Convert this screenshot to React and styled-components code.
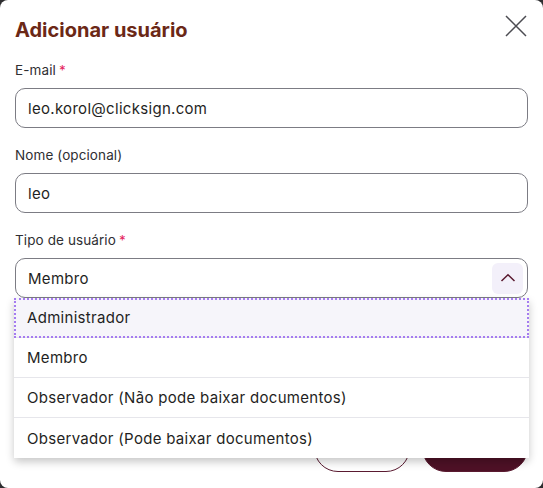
import styled, { createGlobalStyle } from "styled-components";

const GlobalStyle = createGlobalStyle`
  * { box-sizing: border-box; }
  html, body { margin: 0; height: 100%; }
  body {
    background: #2e2e30;
    font-family: "Inter", "Noto Sans", sans-serif;
  }
`;

const Dialog = styled.div`
  height: 100vh;
  background: #fff;
  border-radius: 8px;
  padding: 16px 15px 0 15px;
  display: flex;
  flex-direction: column;
`;

const Header = styled.div`
  display: flex;
  justify-content: space-between;
  align-items: flex-start;
  height: 28px;
  margin-bottom: 16px;
`;

const Title = styled.h2`
  margin: 0;
  font-size: 20px;
  line-height: 28px;
  font-weight: 700;
  color: #6b2816;
`;

const CloseButton = styled.button`
  border: none;
  background: none;
  padding: 0;
  margin: -2px 0 0 0;
  width: 24px;
  height: 24px;
  display: flex;
  align-items: center;
  justify-content: center;
  color: #4c4c52;
`;

const Field = styled.div`
  display: flex;
  flex-direction: column;
  gap: 8px;
  margin-bottom: 17px;
  position: relative;
`;

const Label = styled.label`
  font-size: 13.5px;
  line-height: 20px;
  color: #2f2f33;
  letter-spacing: 0.1px;
`;

const Required = styled.span`
  color: #e5265f;
  margin-left: 3px;
`;

const Input = styled.div`
  height: 40px;
  border: 1px solid #7c7c84;
  border-radius: 10px;
  padding: 0 12px;
  display: flex;
  align-items: center;
  justify-content: space-between;
  font-size: 15px;
  letter-spacing: 0.3px;
  color: #1f1f23;
`;

const ChevronButton = styled.span`
  width: 31px;
  height: 31px;
  margin-right: -8px;
  border-radius: 6px;
  background: #f3f0fa;
  display: flex;
  align-items: center;
  justify-content: center;
`;

const Menu = styled.ul`
  position: absolute;
  top: 100%;
  left: -1px;
  right: -1px;
  margin: 0;
  padding: 0;
  list-style: none;
  background: #fff;
  border-radius: 0 0 4px 4px;
  box-shadow: 0 4px 8px rgba(0, 0, 0, 0.22);
  z-index: 2;
`;

const Option = styled.li`
  height: 40px;
  display: flex;
  align-items: center;
  padding: 0 13px;
  font-size: 15px;
  letter-spacing: 0.3px;
  color: #1f1f23;
  background: ${(p) => (p.$active ? "#f6f5fa" : "#fff")};
  outline: ${(p) => (p.$active ? "2px dotted #a57cf0" : "none")};
  outline-offset: -2px;
  &:not(:last-child) {
    border-bottom: 1px solid #e6e6eb;
  }
`;

const Footer = styled.div`
  margin-top: auto;
  margin-bottom: 16px;
  display: flex;
  justify-content: flex-end;
  gap: 12px;
`;

const Button = styled.button`
  height: 48px;
  border-radius: 24px;
  padding: 0 24px;
  font-family: inherit;
  font-size: 14px;
  font-weight: 600;
  border: 1px solid #5a1a30;
  background: ${(p) => (p.$primary ? "#4e1126" : "#fff")};
  color: ${(p) => (p.$primary ? "#fff" : "#4e1126")};
  width: ${(p) => (p.$primary ? "106px" : "96px")};
`;

const options = [
  "Administrador",
  "Membro",
  "Observador (Não pode baixar documentos)",
  "Observador (Pode baixar documentos)",
];

export default function App() {
  return (
    <>
      <GlobalStyle />
      <Dialog>
        <Header>
          <Title>Adicionar usuário</Title>
          <CloseButton aria-label="Fechar">
            <svg width="24" height="24" viewBox="0 0 24 24" fill="none">
              <path d="M2 2L22 22M22 2L2 22" stroke="currentColor" strokeWidth="1.5" />
            </svg>
          </CloseButton>
        </Header>

        <Field>
          <Label>
            E-mail<Required>*</Required>
          </Label>
          <Input>leo.korol@clicksign.com</Input>
        </Field>

        <Field>
          <Label>Nome (opcional)</Label>
          <Input>leo</Input>
        </Field>

        <Field>
          <Label>
            Tipo de usuário<Required>*</Required>
          </Label>
          <div style={{ position: "relative" }}>
            <Input>
              Membro
              <ChevronButton>
                <svg width="16" height="16" viewBox="0 0 16 16" fill="none">
                  <path d="M1.5 11L8 4.8L14.5 11" stroke="#5a1a30" strokeWidth="1.5" />
                </svg>
              </ChevronButton>
            </Input>
            <Menu>
              {options.map((o, i) => (
                <Option key={o} $active={i === 0}>
                  {o}
                </Option>
              ))}
            </Menu>
          </div>
        </Field>

        <Footer>
          <Button>Cancelar</Button>
          <Button $primary>Adicionar</Button>
        </Footer>
      </Dialog>
    </>
  );
}
